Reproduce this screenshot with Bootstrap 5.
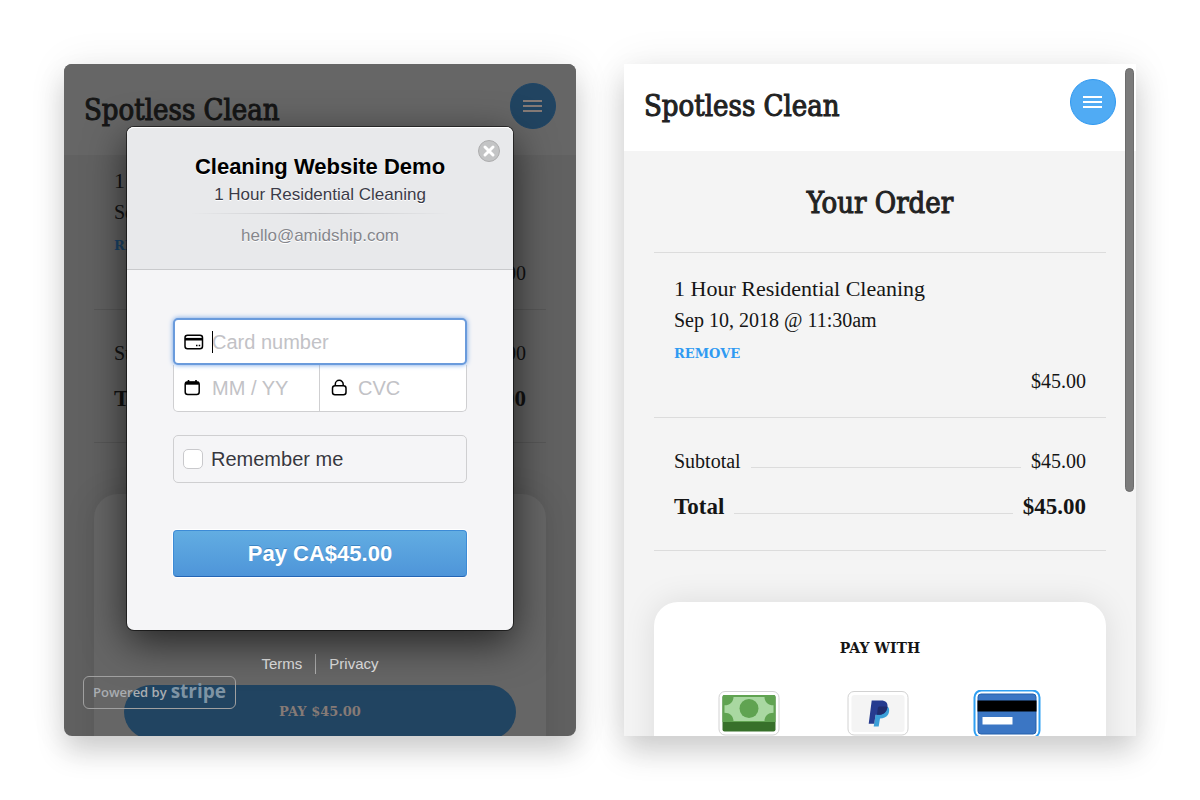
<!DOCTYPE html>
<html lang="en">
<head>
<meta charset="utf-8">
<meta name="viewport" content="width=device-width, initial-scale=1">
<title>Spotless Clean – Checkout</title>
<link href="https://cdn.jsdelivr.net/npm/bootstrap@5.3.0/dist/css/bootstrap.min.css" rel="stylesheet">
<style>
  :root { --slab-head: "DejaVu Serif Condensed", "DejaVu Serif", serif; --slab: "DejaVu Serif", serif; --copy: "Liberation Serif", serif; --ui: "Liberation Sans", sans-serif; }
  body { background: #fff; font-family: var(--copy); }
  .stage { padding: 64px; min-height: 100vh; }
  .panel {
    --bar: #fff; --page: #f4f4f4; --ink: #222; --text: #151515; --line: #dcdcdc;
    --accent: #50abf4; --ring: #2f98f0; --link: #2f9af2; --on-accent: #fff;
    height: calc(100vh - 128px); min-height: 672px; background: var(--page); color: var(--text);
    box-shadow: 0 0 40px rgba(0,0,0,.07), 0 16px 28px rgba(0,0,0,.17);
  }
  .panel-clip { border-radius: inherit; }
  .panel-dim {
    --bar: #666; --page: #616161; --ink: #161616; --text: #111; --line: #575757;
    --accent: #214461; --ring: #1f4566; --link: #1a4468; --on-accent: #857a76;
    border-radius: 8px;
  }
  .topbar { background: var(--bar); padding: 15px 20px 22px; }
  .panel-dim .topbar { padding-top: 19px; }
  .brand { font: 400 29px/46px var(--slab-head); -webkit-text-stroke: 1px var(--ink); color: var(--ink); padding-top: 4px; }
  .menu-btn { width: 46px; height: 46px; border: 1px solid var(--ring); border-radius: 50%; background: var(--accent); color: var(--on-accent); }
  .order { padding: 0 30px; }
  .order-title { font: 400 29px/40px var(--slab-head); -webkit-text-stroke: 1px var(--ink); color: var(--ink); padding: 32px 0 29px; margin: 0; }
  .ruled { border-top: 1px solid var(--line); }
  .item { padding: 20px 20px 24px; }
  .panel-dim .item { padding-top: 10px; }
  .item-name { font-size: 22px; line-height: 32px; margin: 0; font-weight: 400; }
  .fs-copy { font-size: 20px; line-height: 30px; }
  .item-price { font-size: 20px; line-height: 24px; }
  .remove { font: 700 13px/30px var(--slab); color: var(--link); padding-top: 4px; }
  .sums { padding: 28px 20px; border-bottom: 1px solid var(--line); }
  .grand { font-size: 23px; line-height: 30px; font-weight: 700; padding-top: 16px; }
  .leader { border-bottom: 1px solid var(--line); margin: 0 10px 8px; }
  .pay-box { background: var(--bar); margin-top: 51px; border-radius: 24px 24px 0 0; padding: 32px 30px; box-shadow: 0 0 32px rgba(0,0,0,.1); }
  .panel-dim .pay-box { padding-top: 191px; height: 400px; }
  .pay-title { font: 700 14px/28px var(--slab); margin: 0 0 28px; }
  .pay-methods { padding-right: 4px; }
  .pay-option { height: 48px; }
  .pay-btn { height: 54px; border: 0; border-radius: 27px; background: var(--accent); color: var(--on-accent); font: 700 13px/54px var(--slab); padding: 0; }
  .thumb { top: 4px; right: 2px; width: 9px; height: 424px; border-radius: 5px; background: #7b7b7b; border: 1px solid #6c6c6c; }

  .veil { font-family: var(--ui); padding: 63px; }
  .checkout { border-radius: 7px; background: #f5f5f7; box-shadow: 0 0 0 1px rgba(0,0,0,.55), 0 12px 40px rgba(0,0,0,.65); }
  .checkout-head { background: #e8e9eb; border-bottom: 1px solid #c9cacc; border-radius: 7px 7px 0 0; box-shadow: inset 0 1px 0 #fff; height: 143px; padding-top: 26px; text-shadow: 0 1px 0 #fff; }
  .shop { font-size: 22px; line-height: 28px; font-weight: 700; color: #000; margin: 0; }
  .what { font-size: 17px; line-height: 27px; color: #3b3b48; margin: 0; }
  .fade-line { height: 1px; width: 260px; margin: 5px auto 9px; background: linear-gradient(90deg, transparent, #c4c5c8, transparent); }
  .mail { font-size: 17px; line-height: 26px; color: #85868c; }
  .close-btn { top: 13px; right: 13px; width: 22px; height: 22px; }
  .checkout-body { padding: 48px 46px 53px; }
  .field { background: #fff; border: 1px solid #cfcfd1; height: 47px; padding-left: 10px; color: #000; }
  .field svg { width: 20px; flex: none; }
  .field input { font-size: 20px; border: 0; outline: 0; background: transparent; padding: 0; margin-left: 8px; min-width: 0; width: 100%; caret-color: transparent; }
  .field input::placeholder { color: #c2c2c6; opacity: 1; }
  .field-card { border: 2px solid #6a9bdc; border-radius: 5px; box-shadow: 0 0 5px #6b9fe6; padding-left: 9px; z-index: 1; }
  .field-exp, .field-cvc { border-top: 0; width: 50%; }
  .field-exp { border-radius: 0 0 0 5px; }
  .field-cvc { border-left: 0; border-radius: 0 0 5px 0; }
  .text-cursor { left: 37px; top: 11px; width: 1px; height: 22px; background: #000; }
  .remember { height: 48px; margin: 23px 0 47px; border: 1px solid #cfcfd1; border-radius: 5px; padding: 0 9px; font-size: 20px; color: #37373f; text-shadow: 0 1px 0 #fff; }
  .remember input { width: 20px; height: 20px; margin: 0 8px 0 0; border: 1px solid #c9c9cc; border-radius: 4px; }
  .charge { height: 47px; border: 1px solid #3d8bd6; border-bottom-color: #2465b5; border-radius: 4px; background: linear-gradient(#62ade2, #4e95d9); box-shadow: 0 0 0 1px #fff; color: #fff; font-size: 22px; font-weight: 700; text-shadow: 0 -1px 0 rgba(20,90,160,.45); }
  .legal { padding-top: 24px; font-size: 15px; line-height: 20px; }
  .legal a { color: #e6e6e6; text-decoration: none; padding: 0 13px; }
  .legal a + a { border-left: 1px solid #b0b0b0; }
  .stripe-badge { left: 19px; bottom: 27px; width: 153px; height: 33px; border: 1px solid #a0a0a0; border-radius: 6px; color: #a9adb1; font: 600 13px/30px "Open Sans", sans-serif; text-decoration: none; padding: 0 9px; white-space: nowrap; }
  .stripe-badge strong { font-size: 19px; line-height: 28px; font-weight: 700; color: #7f94a4; }
</style>
</head>
<body>
<main class="stage container-fluid">
  <div class="row gx-5">
    <section class="col-12 col-lg-6" aria-label="Card checkout">
      <div class="panel panel-dim position-relative">
        <div class="panel-clip h-100 overflow-hidden">
          <header class="topbar d-flex justify-content-between align-items-start">
            <div class="brand">Spotless Clean</div>
            <button class="menu-btn d-flex align-items-center justify-content-center p-0" aria-label="Menu">
              <svg width="20" height="14" viewBox="0 0 20 14" fill="none" stroke="currentColor" stroke-width="2"><path d="M0 2h19M0 7h19M0 12h19"/></svg>
            </button>
          </header>
          <div class="order">
            <div class="item">
              <p class="item-name">1 Hour Residential Cleaning</p>
              <div class="fs-copy">Sep 10, 2018 @ 11:30am</div>
              <a class="remove d-block text-decoration-none" href="#">REMOVE</a>
              <div class="item-price text-end">$45.00</div>
            </div>
            <div class="sums ruled">
              <div class="d-flex fs-copy"><span>Subtotal</span><span class="leader flex-grow-1"></span><span>$45.00</span></div>
              <div class="d-flex grand"><span>Total</span><span class="leader flex-grow-1"></span><span>$45.00</span></div>
            </div>
            <div class="pay-box"><button class="pay-btn w-100">PAY $45.00</button></div>
          </div>
        </div>

        <div class="veil position-absolute top-0 start-0 w-100">
          <form class="checkout position-relative">
            <div class="checkout-head text-center">
              <h2 class="shop">Cleaning Website Demo</h2>
              <p class="what">1 Hour Residential Cleaning</p>
              <div class="fade-line"></div>
              <div class="mail">hello@amidship.com</div>
              <button type="button" class="close-btn position-absolute border-0 bg-transparent p-0 d-flex" aria-label="Close">
                <svg width="22" height="22" viewBox="0 0 22 22"><circle cx="11" cy="11" r="10.5" fill="#c3c4c5" stroke="#adadae"/><path d="M7 7l8 8M15 7l-8 8" stroke="#fff" stroke-width="3" stroke-linecap="round"/></svg>
              </button>
            </div>
            <div class="checkout-body">
              <div class="field field-card d-flex align-items-center position-relative">
                <svg height="16" viewBox="0 0 20 16" fill="none" stroke="currentColor" stroke-width="1.5"><rect x="1" y="1.2" width="17.5" height="13.5" rx="2.5"/><path d="M1 5.2h17.5" stroke-width="2.6"/><path d="M12 11.6h1.5M14.7 11.6h1.5"/></svg>
                <input type="text" placeholder="Card number" aria-label="Card number">
                <span class="text-cursor position-absolute"></span>
              </div>
              <div class="d-flex">
                <div class="field field-exp d-flex align-items-center">
                  <svg height="18" viewBox="0 0 20 18" fill="none" stroke="currentColor" stroke-width="1.5"><rect x="1.2" y="3" width="14" height="12.5" rx="2.5"/><path d="M1.5 4.2h13.4" stroke-width="3"/><path d="M4.5 1v3M12 1v3" stroke-width="1.6"/></svg>
                  <input type="text" placeholder="MM / YY" aria-label="Expiry date">
                </div>
                <div class="field field-cvc d-flex align-items-center">
                  <svg height="18" viewBox="-1 0 20 18" fill="none" stroke="currentColor" stroke-width="1.5"><rect x="1.5" y="6.7" width="13.5" height="9" rx="2.5"/><path d="M4.3 6.7V5.2a3.9 3.9 0 0 1 7.9 0v1.5"/></svg>
                  <input type="text" placeholder="CVC" aria-label="CVC">
                </div>
              </div>
              <label class="remember d-flex align-items-center"><input class="form-check-input" type="checkbox">Remember me</label>
              <button type="button" class="charge w-100 p-0">Pay CA$45.00</button>
            </div>
          </form>
          <nav class="legal d-flex justify-content-center" aria-label="Legal"><a href="#">Terms</a><a href="#">Privacy</a></nav>
        </div>
        <a class="stripe-badge position-absolute d-flex justify-content-between" href="#"><span>Powered by</span><strong>stripe</strong></a>
      </div>
    </section>

    <section class="col-12 col-lg-6" aria-label="Order">
      <div class="panel position-relative">
        <div class="panel-clip h-100 overflow-hidden">
          <header class="topbar d-flex justify-content-between align-items-start">
            <div class="brand">Spotless Clean</div>
            <button class="menu-btn d-flex align-items-center justify-content-center p-0" aria-label="Menu">
              <svg width="20" height="14" viewBox="0 0 20 14" fill="none" stroke="currentColor" stroke-width="2"><path d="M0 2h19M0 7h19M0 12h19"/></svg>
            </button>
          </header>
          <div class="order">
            <h1 class="order-title text-center">Your Order</h1>
            <div class="item ruled">
              <h2 class="item-name">1 Hour Residential Cleaning</h2>
              <div class="fs-copy">Sep 10, 2018 @ 11:30am</div>
              <a class="remove d-block text-decoration-none" href="#">REMOVE</a>
              <div class="item-price text-end">$45.00</div>
            </div>
            <div class="sums ruled">
              <div class="d-flex fs-copy"><span>Subtotal</span><span class="leader flex-grow-1"></span><span>$45.00</span></div>
              <div class="d-flex grand"><span>Total</span><span class="leader flex-grow-1"></span><span>$45.00</span></div>
            </div>
            <div class="pay-box">
              <h3 class="pay-title text-center">PAY WITH</h3>
              <div class="row g-0 pay-methods">
                <label class="pay-option col-4 d-flex justify-content-center">
                  <input class="visually-hidden" type="radio" name="method" aria-label="Cash">
                  <svg width="62" height="46" viewBox="0 0 62 46"><rect x="1" y="1.5" width="60" height="43.5" rx="6" fill="#fff" stroke="#d2d2d2"/><rect x="4.5" y="5" width="53" height="36.5" rx="2" fill="#37702a"/><path d="M4.5 7a2 2 0 0 1 2-2h49a2 2 0 0 1 2 2V32h-53z" fill="#60a351"/><path d="M15.5 7h31c0 4.8 3.6 8.300 9 8.300v7.400c-5.400 0-9 3.300-9 8.300h-31c0-5-3.600-8.300-9-8.300v-7.400c5.400 0 9-3.500 9-8.300z" fill="#a9d8a1"/><circle cx="31" cy="18.5" r="9.5" fill="#60a351"/></svg>
                </label>
                <label class="pay-option col-4 d-flex justify-content-center">
                  <input class="visually-hidden" type="radio" name="method" aria-label="PayPal">
                  <svg width="62" height="46" viewBox="0 0 62 46"><rect x="1" y="1.5" width="60" height="43.5" rx="6" fill="#fff" stroke="#d2d2d2"/><rect x="4.5" y="5" width="53" height="37" rx="3" fill="#f4f4f4"/><path d="M40.5 16.5c2.200 1.600 2.200 5.800.3 8.600-1.600 2.500-4.300 3.300-7.800 3.300l-1.300 8.100h-5l2.600-16z" fill="#3b9fd8"/><path d="M24.700 10.500h9.300c4.700 0 7.200 2.400 6.400 7-.8 5-4.100 7.300-9 7.300h-2.800l-1.400 9h-5.500z" fill="#263b8f"/><path d="M30 24.800l.8-6.500c.1-1.300.9-1.900 2-1.900h4.500c1.200 0 2.200.1 3.100.5-.7 5.300-4 7.900-9 7.900z" fill="#212c6d"/></svg>
                </label>
                <label class="pay-option col-4 d-flex justify-content-center">
                  <input class="visually-hidden" type="radio" name="method" aria-label="Card" checked>
                  <svg width="68" height="50" viewBox="0 2 68 50"><rect x="1.5" y="2.500" width="65" height="47" rx="7" fill="#fff" stroke="#2f9ff2" stroke-width="2"/><rect x="5" y="6" width="58" height="40" rx="3" fill="#3b76c4" stroke="#2461ac"/><path d="M4.5 12.500h59v11h-59z" fill="#000"/><path d="M9.500 29h30v7.500h-30z" fill="#fff"/></svg>
                </label>
              </div>
            </div>
          </div>
        </div>
        <div class="thumb position-absolute"></div>
      </div>
    </section>
  </div>
</main>
<script src="https://cdn.jsdelivr.net/npm/bootstrap@5.3.0/dist/js/bootstrap.bundle.min.js"></script>
</body>
</html>
